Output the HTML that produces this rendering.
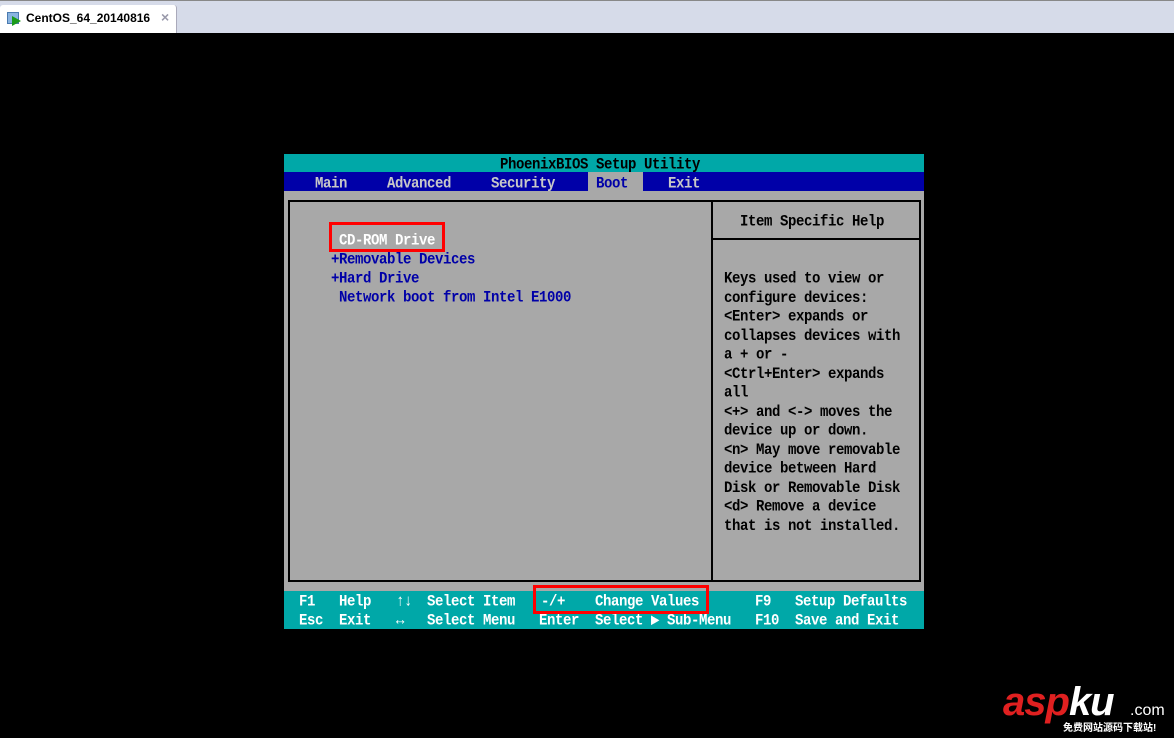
<!DOCTYPE html>
<html><head><style>
body{margin:0;width:1174px;height:738px;background:#000;position:relative;overflow:hidden;font-family:"Liberation Mono",monospace}
.t{position:absolute;margin-top:2px;font-size:14px;font-weight:bold;letter-spacing:-0.4px;line-height:16.5px;white-space:pre;transform:scaleY(1.15);transform-origin:0 0}
.w{color:#fff}.b{color:#0000a8}.k{color:#000}.g{color:#c8c8c8}
.r{position:absolute;border:3px solid #f00;box-sizing:border-box}
</style></head><body>
<div style="position:absolute;left:0;top:0;width:1174px;height:33px;background:#d6dbe9;border-top:1px solid #888;box-sizing:border-box"></div>
<div style="position:absolute;left:0;top:5px;width:176px;height:28px;background:#fff;border-radius:3px 3px 0 0;border-right:1px solid #aab"></div>
<div style="position:absolute;left:7px;top:12px;width:10px;height:10px;background:#8ab4e0;border:1px solid #4a7ab0"></div>
<div style="position:absolute;left:12px;top:16px;width:0;height:0;border-left:9px solid #1a9a1a;border-top:5px solid transparent;border-bottom:5px solid transparent"></div>
<div style="position:absolute;left:26px;top:11px;font:bold 12px 'Liberation Sans',sans-serif;color:#000">CentOS_64_20140816</div>
<div style="position:absolute;left:161px;top:9px;font:bold 14px 'Liberation Sans',sans-serif;color:#99a">×</div>

<div style="position:absolute;left:284px;top:154px;width:640px;height:18px;background:#00a8a8"></div>
<div style="position:absolute;left:284px;top:172px;width:640px;height:19px;background:#0000a8"></div>
<div style="position:absolute;left:588px;top:172px;width:55px;height:19px;background:#a8a8a8"></div>
<div style="position:absolute;left:284px;top:191px;width:640px;height:400px;background:#a8a8a8"></div>
<div style="position:absolute;left:288px;top:200px;width:633px;height:382px;border:2px solid #000;box-sizing:border-box"></div>
<div style="position:absolute;left:711px;top:200px;width:2px;height:382px;background:#000"></div>
<div style="position:absolute;left:711px;top:238px;width:210px;height:2px;background:#000"></div>
<div style="position:absolute;left:284px;top:591px;width:640px;height:38px;background:#00a8a8"></div>

<div class="t k" style="left:500px;top:154px">PhoenixBIOS Setup Utility</div>
<div class="t g" style="left:315px;top:173px">Main</div>
<div class="t g" style="left:387px;top:173px">Advanced</div>
<div class="t g" style="left:491px;top:173px">Security</div>
<div class="t b" style="left:596px;top:173px">Boot</div>
<div class="t g" style="left:668px;top:173px">Exit</div>

<div class="t w" style="left:339px;top:230px">CD-ROM Drive</div>
<div class="t b" style="left:331px;top:249px">+Removable Devices</div>
<div class="t b" style="left:331px;top:268px">+Hard Drive</div>
<div class="t b" style="left:339px;top:287px">Network boot from Intel E1000</div>
<div class="r" style="left:329px;top:222px;width:116px;height:30px"></div>

<div class="t k" style="left:740px;top:211px">Item Specific Help</div>
<div class="t k" style="left:724px;top:268px">Keys used to view or
configure devices:
&lt;Enter&gt; expands or
collapses devices with
a + or -
&lt;Ctrl+Enter&gt; expands
all
&lt;+&gt; and &lt;-&gt; moves the
device up or down.
&lt;n&gt; May move removable
device between Hard
Disk or Removable Disk
&lt;d&gt; Remove a device
that is not installed.</div>

<div class="t w" style="left:299px;top:591px">F1</div>
<div class="t w" style="left:339px;top:591px">Help</div>
<div class="t w" style="left:396px;top:591px">↑↓</div>
<div class="t w" style="left:427px;top:591px">Select Item</div>
<div class="t w" style="left:541px;top:591px">-/+</div>
<div class="t w" style="left:595px;top:591px">Change Values</div>
<div class="t w" style="left:755px;top:591px">F9</div>
<div class="t w" style="left:795px;top:591px">Setup Defaults</div>
<div class="t w" style="left:299px;top:610px">Esc</div>
<div class="t w" style="left:339px;top:610px">Exit</div>
<div class="t w" style="left:396px;top:610px">↔</div>
<div class="t w" style="left:427px;top:610px">Select Menu</div>
<div class="t w" style="left:539px;top:610px">Enter</div>
<div class="t w" style="left:595px;top:610px">Select ▶ Sub-Menu</div>
<div class="t w" style="left:755px;top:610px">F10</div>
<div class="t w" style="left:795px;top:610px">Save and Exit</div>
<div class="r" style="left:533px;top:585px;width:176px;height:29px"></div>

<div style="position:absolute;left:1003px;top:680px;font:italic bold 40px 'Liberation Sans',sans-serif;color:#e02020;letter-spacing:-1px">asp<span style="color:#fff">ku</span></div>
<div style="position:absolute;left:1130px;top:702px;font:16px 'Liberation Sans',sans-serif;color:#fff">.com</div>
<div style="position:absolute;left:1063px;top:719px;font:bold 10px 'Liberation Sans','Noto Sans CJK SC',sans-serif;color:#fff">免费网站源码下载站!</div>
</body></html>
